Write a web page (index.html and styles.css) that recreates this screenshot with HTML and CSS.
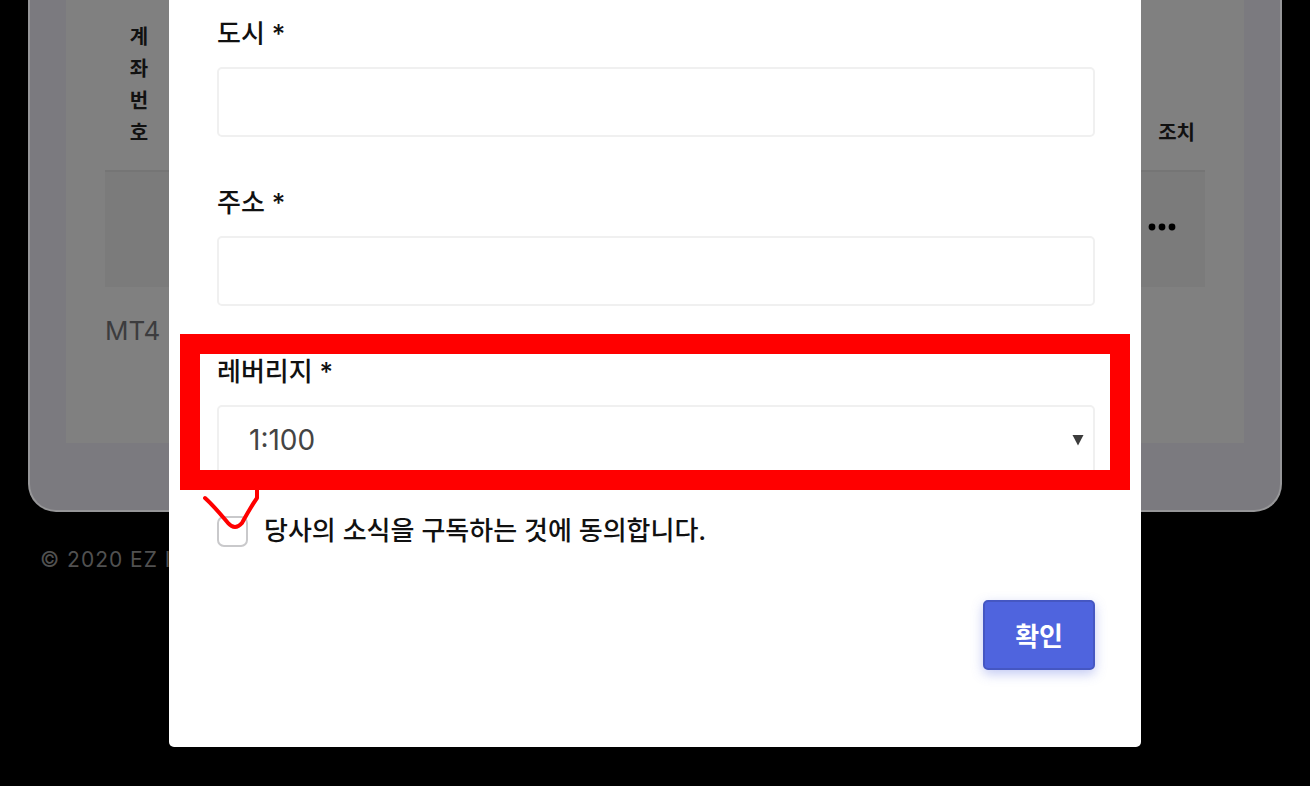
FILE: index.html
```html
<!DOCTYPE html>
<html lang="ko">
<head>
  <meta charset="UTF-8" />
  <meta name="viewport" content="width=device-width, initial-scale=1.0"/>
  <title>계좌 개설</title>
  <link rel="stylesheet" href="styles.css">
</head>
<body>

  <main class="panel">
    <div class="card">
      <table class="accounts">
        <thead>
          <tr>
            <th class="col-number">계좌번호</th>
            <th></th>
            <th class="col-action">조치</th>
          </tr>
        </thead>
        <tbody>
          <tr>
            <td></td>
            <td></td>
            <td class="col-action">
              <button class="more-btn" type="button" aria-label="조치">
                <svg width="28" height="8" viewBox="0 0 28 8"><circle cx="4" cy="4" r="3.4"/><circle cx="14" cy="4" r="3.4"/><circle cx="24" cy="4" r="3.4"/></svg>
              </button>
            </td>
          </tr>
        </tbody>
      </table>
      <p class="platform">MT4</p>
    </div>
  </main>

  <footer class="footer">© 2020 EZ I</footer>

  <!-- Modal -->
  <div class="overlay">
    <form class="modal">
      <div class="form-group">
        <label for="city">도시 *</label>
        <input class="control" type="text" id="city">
      </div>

      <div class="form-group">
        <label for="address">주소 *</label>
        <input class="control" type="text" id="address">
      </div>

      <div class="form-group">
        <label for="leverage">레버리지 *</label>
        <div class="select-wrap">
          <select class="control" id="leverage">
            <option>1:100</option>
          </select>
          <svg class="arrow" width="12" height="12" viewBox="0 0 12 12"><path d="M0.5 1h11L6 11.5z"/></svg>
        </div>
        <div class="highlight"></div>
      </div>

      <div class="check-row">
        <input type="checkbox" id="news">
        <label for="news">당사의 소식을 구독하는 것에 동의합니다.</label>
        <svg class="scribble" width="64" height="48" viewBox="0 0 64 48"><path d="M9 14C18 22 26 32 32 39Q39 47 46 39C50 32 54 24 61 14V2"/></svg>
      </div>

      <div class="actions">
        <button class="btn" type="button">확인</button>
      </div>
    </form>
  </div>

</body>
</html>
```

FILE: styles.css
```css
* {
  box-sizing: border-box;
  margin: 0;
  padding: 0;
}

body {
  font-family: Inter, "Noto Sans CJK KR", sans-serif;
  background-color: #000;
  color: #111;
  min-height: 100vh;
}

.panel {
  margin: 0 28px;
  padding: 0 36px 67px;
  background-color: #7b7a7f;
  border: 2px solid #969698;
  border-top: none;
  border-radius: 0 0 28px 28px;
}

.card {
  padding: 0 39px 94px;
  background-color: #808080;
}

.accounts {
  width: 100%;
  border-collapse: collapse;
}

.accounts th {
  height: 171px;
  padding: 0 24px 21px;
  font-size: 20px;
  font-weight: 700;
  line-height: 32px;
  vertical-align: bottom;
  border-bottom: 2px solid #757575;
}

.accounts .col-number {
  width: 68px;
}

.accounts .col-action {
  width: 86px;
  padding-left: 0;
  padding-right: 10px;
  text-align: right;
}

.accounts td {
  height: 116px;
  padding-bottom: 5px;
  background-color: #7b7b7b;
}

.more-btn {
  display: block;
  margin-left: 29px;
  background: none;
  border: none;
  cursor: pointer;
}

.more-btn svg {
  display: block;
}

.platform {
  margin-top: 26px;
  font-size: 26px;
  line-height: 36px;
  color: #3c3c3e;
}

.footer {
  padding: 32px 40px;
  font-size: 21px;
  line-height: 32px;
  letter-spacing: 1px;
  color: #515151;
}

.overlay {
  position: fixed;
  top: 0;
  left: 0;
  width: 100%;
  padding: 0 169px;
}

.modal {
  padding: 16px 46px 77px 48px;
  background-color: #fff;
  border-radius: 0 0 5px 5px;
}

.form-group {
  position: relative;
  margin-bottom: 48px;
}

label {
  display: block;
  font-size: 26px;
  font-weight: 500;
  line-height: 36px;
}

.form-group label {
  margin-bottom: 15px;
}

.control {
  display: block;
  width: 100%;
  height: 70px;
  padding: 0 30px;
  font-family: inherit;
  font-size: 28px;
  color: #444;
  background-color: #fff;
  border: 2px solid #f0f0f0;
  border-radius: 5px;
  appearance: none;
}

.select-wrap {
  position: relative;
}

.arrow {
  position: absolute;
  top: 29px;
  right: 11px;
  fill: #3c3c3c;
  pointer-events: none;
}

.highlight {
  position: absolute;
  top: -20px;
  right: -35px;
  bottom: -15px;
  left: -37px;
  border: 20px solid #f00;
  pointer-events: none;
}

.check-row {
  position: relative;
  display: flex;
  align-items: center;
  gap: 16px;
  margin-top: -10px;
}

.check-row input {
  width: 31px;
  height: 31px;
  background-color: #fff;
  border: 2px solid #c9c9cb;
  border-radius: 7px;
  appearance: none;
}

.scribble {
  position: absolute;
  top: -29px;
  left: -21px;
  fill: none;
  stroke: #f00;
  stroke-width: 4;
  stroke-linecap: round;
  stroke-linejoin: round;
  pointer-events: none;
}

.actions {
  display: flex;
  justify-content: flex-end;
  margin-top: 51px;
}

.btn {
  padding: 0 30px 2px;
  height: 70px;
  font-family: inherit;
  font-size: 26px;
  font-weight: 700;
  color: #fff;
  background-color: #4f64de;
  border: 2px solid #4557c2;
  border-radius: 5px;
  box-shadow: 0 4px 12px rgba(79, 100, 222, 0.35);
  cursor: pointer;
}
```
